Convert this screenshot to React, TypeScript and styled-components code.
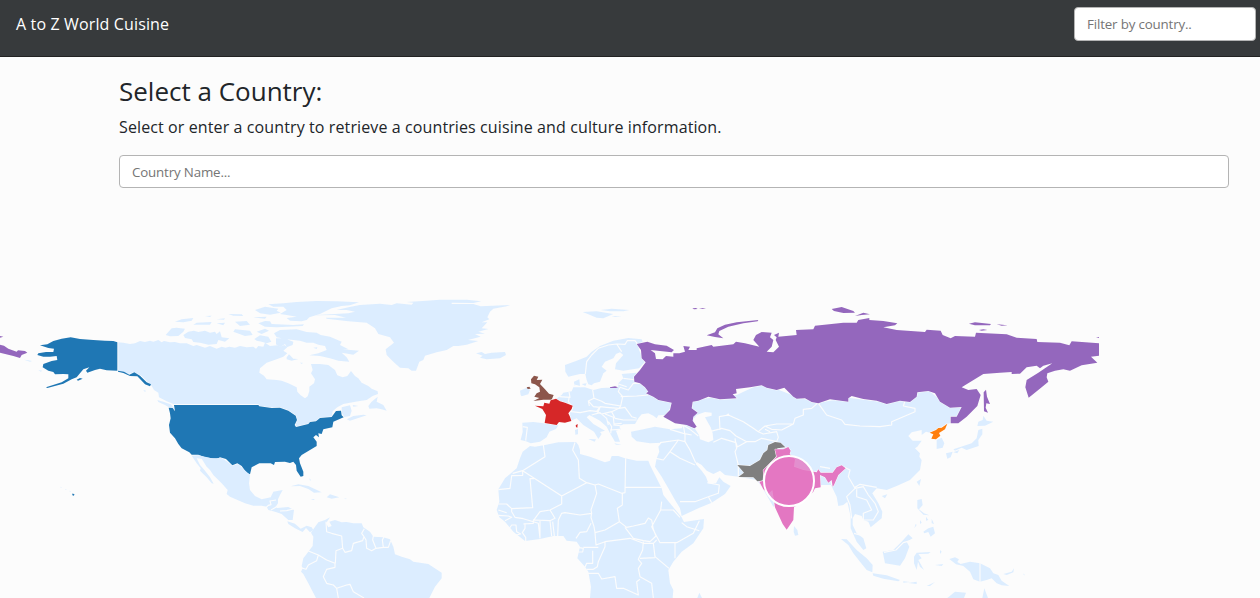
import React from "react";
import styled, { createGlobalStyle } from "styled-components";

const GlobalStyle = createGlobalStyle`
  *, *::before, *::after { box-sizing: border-box; }
  body {
    margin: 0;
    overflow: hidden;
    background: #fcfcfc;
    color: #212529;
    font-family: "Open Sans", "Noto Sans", sans-serif;
    font-size: 16px;
    line-height: 24px;
  }
`;

const Page = styled.div`
  display: flex;
  flex-direction: column;
  height: 598px;
  overflow: hidden;
`;

const NavBar = styled.header`
  display: flex;
  justify-content: space-between;
  align-items: flex-start;
  flex: none;
  height: 57px;
  padding: 7px 4px 0 16px;
  background: #373a3c;
  border-bottom: 1px solid #222;
`;

const Brand = styled.a`
  margin-top: 5px;
  color: #fff;
  font-size: 16px;
  font-weight: 500;
  letter-spacing: 0.14px;
`;

const TextInput = styled.input<{ $width: string; $height: number }>`
  display: block;
  width: ${(p) => p.$width};
  height: ${(p) => p.$height}px;
  padding: 0 12px;
  border: 1px solid #b4b4b4;
  border-radius: 4px;
  background: #fff;
  font-family: inherit;
  font-size: 13.33px;
  letter-spacing: -0.16px;
  outline: none;
  &::placeholder { color: #757575; opacity: 1; }
`;

const Search = styled.section`
  flex: none;
  height: 233px;
  padding: 18px 31px 0 119px;
`;

const Title = styled.h3`
  margin: 0 0 7px;
  font-size: 26px;
  line-height: 33px;
  font-weight: 400;
`;

const Lead = styled.p`
  margin: 0 0 16px;
  letter-spacing: 0.11px;
`;

const MapCanvas = styled.svg`
  display: block;
  flex: none;
  width: 1260px;
  height: 308px;
`;

const Sheet = styled.g`
  fill: #dcedff;
`;

const Country = styled.path<{ $color: string }>`
  fill: ${(p) => p.$color};
  stroke: #fcfcfc;
  stroke-width: 3;
  stroke-linejoin: round;
  paint-order: stroke;
`;

const Border = styled.path`
  fill: none;
  stroke: #fcfcfc;
  stroke-width: 3.4;
  stroke-linejoin: round;
`;

const Water = styled.path`
  fill: #fcfcfc;
`;

const Bubble = styled.circle`
  fill: #e377c2;
  fill-opacity: 0.8;
  stroke: #fff;
  stroke-width: 2;
`;

// Each map sheet holds outlines at a third of a pixel per unit, from its own origin.
const at = (x: number, y: number) => `translate(${x} ${y}) scale(0.333333)`;

const colors = {
  usa: "#1f77b4",
  russia: "#9467bd",
  uk: "#8c564b",
  france: "#d62728",
  india: "#e377c2",
  pakistan: "#7f7f7f",
  northKorea: "#ff7f0e",
};

function NorthAmerica() {
  return (
    <>
      <Sheet transform={at(150, 290)}>
        <path d="M-97 157 -97 242 -65 252 -47 246 -25 258 3 285 12 300 25 308 27 322 50 334 72 343 325 343 330 349 365 354 390 354 415 362 435 375 440 390 436 410 455 408 475 402 480 396 498 394 510 384 545 380 548 364 562 352 580 342 600 338 625 334 650 330 668 318 684 312 683 304 665 296 655 288 635 278 625 265 615 258 603 243 592 258 578 262 562 256 555 240 535 225 510 222 483 222 488 240 483 250 495 268 492 280 478 290 478 303 473 319 465 325 452 316 442 305 440 292 415 280 395 272 380 270 350 268 342 257 328 248 330 235 350 218 380 208 400 200 412 190 400 182 412 172 403 165 390 170 382 166 360 168 345 158 340 170 325 168 318 176 310 170 290 172 270 168 255 173 238 170 226 173 215 170 200 176 180 168 165 173 140 165 130 168 110 160 90 160 75 156 60 157 42 153 35 157 25 150 10 155 0 152 -15 156 -30 153 -45 160 -60 162 -80 158Z" />
        <path d="M47 135 65 115 80 113 105 116 100 125 85 138 60 139Z M100 135 115 125 132 122 145 126 165 122 180 128 195 125 200 132 210 124 215 142 238 145 225 155 205 150 200 162 175 164 150 158 130 156 125 148 105 144Z M75 95 95 88 130 84 125 92 100 97Z M130 104 140 98 185 96 180 104Z M200 100 225 98 220 106Z M165 78 185 77 180 81Z M235 72 275 73 280 78 250 77Z M200 88 225 85 222 89Z M255 95 290 93 300 104 270 108Z M325 100 345 93 360 94 365 102 430 105 462 103 458 108 380 112 345 110Z M355 43 400 40 440 36 500 33 560 34 627 37 600 46 575 48 545 55 510 72 478 82 470 90 455 94 420 92 410 84 440 80 410 75 390 72 410 60 400 50 370 50Z M315 60 345 50 385 56 380 62 392 68 360 74 330 70Z M310 82 350 80 345 86Z M255 118 300 122 308 135 285 138 250 125Z M320 125 345 116 357 122 335 132Z M372 130 390 120 440 118 470 126 500 128 512 135 540 140 575 155 570 165 595 178 578 178 627 182 610 194 575 188 590 202 598 215 565 212 540 205 510 198 478 196 505 190 530 180 525 168 505 164 490 158 470 158 450 152 410 148 380 142Z M313 147 330 136 355 140 364 155 350 160 335 155 320 152Z M378 145 400 144 430 155 428 165 410 172 405 162 390 172 378 163Z M410 202 417 193 430 206 445 207 425 212 410 208Z M490 173 502 172 500 177Z M450 218 458 218 456 222Z" />
        <path d="M655 348 665 335 683 320 680 335 700 345 710 362 695 358 680 355 658 356Z M590 388 610 378 640 374 650 376 625 384 600 392Z M575 352 600 346 605 362 600 378 583 381 575 368Z M608 345 625 348 610 350Z" />
        <path d="M-20 300 -12 302 -15 306Z M22 330 40 335 62 343 74 356 65 357 45 345 25 336Z" />
        <Border d="M-97 155V243" />
        <Country $color={colors.usa} d="M72 345 325 345 328 349 365 354 390 353 415 362 437 377 441 390 434 405 438 411 475 402 480 396 498 394 510 384 545 381 558 363 573 362 575 376 581 382 550 395 547 412 520 418 515 432 505 430 507 442 498 435 490 442 500 455 500 468 480 480 455 495 447 505 450 520 460 545 460 558 452 560 440 542 438 525 430 515 420 519 405 515 375 516 372 525 362 520 328 520 305 532 300 553 290 549 275 528 262 520 247 526 228 507 210 502 200 507 165 502 145 494 125 494 118 487 95 475 85 462 75 445 60 428 57 405 62 385 60 370 56 353 68 354 75 364Z" />
      </Sheet>
      <Sheet transform={at(0, 290)}>
        <path d="M72 209 85 211 96 213 90 215Z M115 240 127 242 122 245Z M182 590 186 592 182 593Z M196 597 200 598 197 600Z M208 602 214 604 210 605Z" />
        <Country $color={colors.usa} d="M352 157 340 153 315 152 280 150 240 147 212 142 185 146 160 153 142 163 120 166 145 174 162 176 160 186 138 186 115 190 112 195 130 200 150 200 170 198 172 210 155 213 130 222 128 232 145 242 160 246 165 253 190 252 205 253 205 265 185 277 138 292 142 294 190 281 215 268 230 262 240 250 250 238 268 232 258 242 262 248 285 240 300 236 320 241 352 242Z" />
        <path fill={colors.usa} d="M354 242 372 245 388 254 403 247 420 257 430 267 440 277 453 283 450 289 435 283 420 267 412 259 390 258 370 249 354 245Z M230 269 240 264 248 266 234 272Z M216 611 220 611 224 614 219 618Z" />
        <path fill={colors.russia} d="M0 164 12 167 25 176 50 185 54 181 75 183 82 188 65 195 60 204 40 198 0 188Z M0 138 10 140 0 143Z" />
      </Sheet>
      <Sheet transform={at(240, 290)}>
        <path d="M290 60 325 52 340 49 360 45 420 41 455 45 470 40 515 44 520 38 500 36 560 32 600 29 680 29 724 34 700 39 635 38 635 42 700 42 722 49 810 45 800 49 760 56 750 65 742 82 748 88 725 97 742 97 725 115 745 117 715 125 735 131 705 132 722 140 684 150 715 153 680 164 655 168 640 168 620 180 590 187 555 197 550 210 538 215 528 242 515 242 505 235 480 233 460 215 440 195 437 178 462 158 450 142 415 132 405 115 380 98 325 94 260 86 258 83 318 83 285 75 220 76 285 72 325 70 345 65 320 60Z" />
        <Water d="M425 150 435 146 455 150 440 156 425 154Z" />
        <path d="M708 190 725 186 735 192 755 188 795 186 798 195 780 205 740 208 720 203 728 197Z" />
      </Sheet>
    </>
  );
}

function LatinAmerica() {
  return (
    <Sheet transform={at(180, 440)}>
      <path d="M35 47 55 46 95 55 125 54 140 64 157 77 175 72 190 87 210 104 207 130 210 150 225 168 245 178 272 172 280 155 308 150 300 165 294 178 294 190 287 200 292 204 325 201 342 210 338 240 325 240 305 222 285 215 265 210 260 200 245 197 220 197 195 190 150 170 140 162 143 150 125 130 100 105 90 90 80 80 65 56 50 55 60 75 75 92 90 112 101 131 95 130 80 112 60 92 62 85 50 70Z M322 244 345 251 362 266 380 257 395 262 400 270 390 277 378 264 368 276 345 265 325 252Z M332 139 355 133 385 138 425 157 402 158 385 147 360 138Z M440 172 450 163 478 172 455 176Z M393 177 405 177 400 180Z M492 175 500 176 498 178Z M388 115 393 120 390 122Z" />
      <path d="M400 268 415 247 435 240 450 232 438 250 445 262 455 258 448 245 465 240 485 247 500 246 520 250 545 250 550 262 570 275 580 290 610 292 630 298 640 320 645 343 665 350 690 358 700 365 745 372 785 398 785 415 765 440 748 474 408 474 385 430 370 402 363 395 368 385 365 378 370 355 385 335 398 318 400 290 393 278Z" />
      <Border d="M258 203 265 196 273 194 270 183 288 180M273 210 290 200M300 213 320 212 340 207M438 245 440 275 455 280 485 288 488 325 468 332 466 370M488 325 495 337 515 332 520 310 548 302 552 290 545 280 553 266M552 290 558 300 560 325 575 332 588 325 578 300 580 288M588 325 610 322 607 300 612 290M608 322 625 322 632 302M385 333 415 345 410 362 385 375 378 388 366 384M415 345 440 360 465 370 465 382 440 388 430 410 440 430 460 435 470 445 500 435 510 433 520 455 552 474M470 445 475 474" />
    </Sheet>
  );
}

function Africa() {
  return (
    <Sheet transform={at(490, 430)}>
      <path d="M90 85 98 65 120 48 135 50 165 45 205 37 258 36 265 45 270 60 270 72 300 80 345 97 360 92 365 78 385 78 405 85 440 92 475 92 480 105 490 125 515 175 520 195 540 220 575 262 582 276 642 267 640 295 610 340 575 365 550 395 535 420 540 460 550 480 548 504 300 504 303 470 295 425 285 410 262 385 270 350 260 335 230 332 220 318 190 318 150 327 105 333 70 305 45 275 28 262 20 240 28 215 25 178 45 145 80 115Z M622 504 628 488 636 504Z" />
      <Border d="M25 179 60 175 65 137 98 136 98 122 165 80 160 45M68 130 98 122 215 198 290 158 268 145 265 90 248 60 255 37M65 236 128 233 120 146 132 146M215 198 215 222 180 240 150 245 130 272M290 158 315 165 320 190 303 240 305 250 270 255 225 248 215 250 205 270M315 165 325 162 395 190 405 188 407 85M407 172 515 172M397 190 397 225 382 235 388 275 345 300 315 308 312 290 303 262 305 250M388 275 410 292 430 288 465 280 475 264 485 270 490 298 498 318 480 335 460 332 430 325 405 292M515 215 512 240 485 290 490 300 510 338 560 338 610 310 628 272M575 278 590 290 628 302M512 240 550 240 570 262M315 308 318 345 345 335 420 325 460 340 490 340 500 330M345 335 345 350 325 395 322 410 310 418 290 418M490 340 495 380 537 415M450 385 495 383M460 335 458 360 445 388 455 400 445 415 450 440 485 460 490 504M555 337 555 385M290 430 325 430 335 447 375 440 380 475 400 475 445 495 440 455 450 448M303 280 290 305 270 307 258 325M265 352 280 355 278 366 264 366M280 352 325 352M308 362 308 400 290 400 285 412M25 222 50 222 65 236 65 245 75 262 100 266 145 280 150 325M25 240 50 248M25 256 55 258 65 262 45 272M105 280 105 295 97 308 107 322 107 333M55 300 65 285 78 285 80 305 92 312 78 315M100 282 130 280 130 270 180 272 195 265 180 240M150 272 150 325M180 272 185 318M188 275 193 318M205 270 203 318" />
    </Sheet>
  );
}

function Europe() {
  return (
    <Sheet transform={at(490, 300)}>
      <path d="M278 36 320 34 370 42 340 55 320 53 295 43Z M332 30 365 26 418 30 400 34 360 34Z M365 48 395 49 375 51Z M225 195 260 182 290 170 305 155 330 138 370 122 415 114 455 118 458 125 445 135 447 150 465 185 447 205 400 212 375 208 378 190 400 165 390 157 378 162 370 175 345 185 335 200 350 212 340 220 330 245 312 250 305 256 295 253 290 240 286 222 270 222 235 230 226 215Z M253 258 252 245 268 238 270 258Z M275 252 290 250 286 258Z M92 285 90 272 110 263 120 270 115 283 95 289Z" />
      <path d="M97 368 130 366 162 370 205 376 198 387 178 395 170 412 150 425 122 430 108 424 92 420 98 395Z M295 417 318 418 314 425Z M255 390 264 386 264 403 256 404Z M373 430 395 434 378 434Z" />
      <path d="M198 297 215 285 220 278 245 274 250 262 285 262 310 270 335 264 385 262 385 250 400 235 395 222 440 218 440 240 455 250 475 270 475 280 500 298 545 305 545 320 525 345 505 346 500 355 490 347 475 340 455 343 445 355 435 372 400 373 388 380 392 388 378 392 390 425 375 425 360 400 350 380 330 362 308 350 298 345 290 352 310 372 345 392 330 396 335 402 325 417 312 395 280 375 260 355 242 362 240 340 248 322 215 308Z" />
      <Border d="M286 222 290 185 305 165 325 145 355 135 380 132 395 155M380 132 405 133 412 122 435 122 445 135M98 380 112 382 107 422M208 290 240 292 237 275M238 290 235 305 248 322 244 335 270 338 300 332 325 335 330 322 310 320 295 303 312 295 308 270M312 295 335 304 345 310 392 318 398 290 385 275 390 262M295 303 298 318M330 320 350 322 387 325 392 318M330 320 320 335 335 342 365 335 387 325M365 335 375 355 400 360 440 360M387 325 405 322 425 350 440 355M390 262 415 270 430 250 455 250M400 235 440 240M385 252 410 260M392 290 440 288 475 285M305 345 330 338 350 355 355 375M345 342 370 352 372 372 395 370M355 365 365 380 362 400M370 375 400 378M360 390 390 388M252 255 272 260" />
      <Country $color={colors.uk} d="M123 238 132 227 145 230 140 240 157 239 150 252 165 268 177 281 191 285 185 299 160 299 130 303 148 294 133 290 140 280 150 275 148 262 135 253 124 250Z" />
      <path fill={colors.uk} d="M110 262 118 260 122 266 113 267Z" />
      <Country $color={colors.france} d="M135 317 160 319 163 308 178 311 182 301 198 296 210 304 225 308 248 317 245 327 235 340 240 350 244 363 225 368 207 366 200 375 164 369 168 345 157 327Z" />
      <path fill={colors.france} d="M257 376 263 372 262 383 258 381Z" />
    </Sheet>
  );
}

function Asia() {
  return (
    <>
      <Sheet transform={at(630, 300)}>
        <path d="M185 300 320 285 395 250 500 290 565 308 655 293 770 308 862 275 895 270 930 300 1000 318 982 352 962 350 960 370 950 372 918 390 900 398 888 395 875 405 875 390 845 397 835 408 848 422 875 422 862 440 855 445 870 460 868 470 875 480 870 510 840 540 800 558 770 570 740 565 727 580 745 610 757 635 755 655 722 682 715 665 700 660 695 648 675 642 668 655 668 675 680 700 700 715 709 745 700 750 680 725 662 685 662 650 652 605 640 615 625 618 620 590 603 555 575 555 550 570 430 620 395 560 380 540 325 530 285 525 270 512 250 522 230 512 215 495 200 486 197 492 215 512 228 530 235 550 258 550 268 532 280 545 302 558 285 582 245 608 205 625 155 648 150 625 135 600 115 565 95 530 75 500 80 475 88 455 85 440 95 428 60 430 20 424 5 410 3 395 40 388 75 380 120 388 155 385 160 376 130 365 160 330Z" />
        <Water d="M200 345 225 336 245 338 245 347 225 352 235 370 242 382 248 400 250 420 235 427 210 418 207 405 196 388 190 358Z M285 348 295 340 300 348Z" />
        <Border d="M562 310 545 325 520 328 520 345 495 355 490 372 440 372 405 378 385 395 400 402 440 395 445 412 440 425M405 378 425 388 455 390 490 372M405 388 420 395M270 390 268 350 295 345 340 365 370 385 385 395M240 395 275 385 300 392 318 408 350 425 320 442M250 427 275 415 318 428 322 440M350 425 375 425 395 415 440 425M565 310 590 345 635 360 645 373 690 378 750 380 785 375 785 365 820 350 855 335 855 325 820 318 825 303M315 415 320 445 315 455 325 495 325 530M160 376 165 405 165 425 180 450 197 488M90 428 145 420 165 425M145 420 120 455 150 475 195 495M78 475 100 480 120 455M150 605 195 605 235 590 265 580 268 555 232 548M235 590 245 608M120 388 160 400 185 405M160 376 180 388 205 408M470 500 500 510 565 518M570 500 600 505M565 520 600 520 605 555M640 500 660 510 655 530 675 565 650 590 660 615 665 655M675 565 700 560 715 585 735 610 745 635 730 660 700 660M700 660 700 640 725 630 710 600 680 590 680 568M675 562 690 553 740 562M672 700 690 705" />
      </Sheet>
      <Sheet transform={at(720, 420)}>
        <Country $color={colors.pakistan} d="M52 135 90 138 120 120 130 100 142 90 145 75 165 66 182 68 196 82 172 85 172 100 165 115 140 140 130 160 128 182 112 184 100 172 55 171 72 158Z" />
        <Country $color={colors.india} d="M165 88 190 88 205 81 212 92 209 102 225 118 222 140 250 150 290 157 295 148 302 158 338 158 350 142 365 136 377 145 355 165 342 195 338 200 335 180 325 188 315 172 300 165 302 202 285 205 280 215 240 248 222 262 220 300 200 329 188 312 165 262 157 210 145 222 130 208 118 185 132 182 130 150 170 110Z" />
        <path d="M222 318 232 330 235 345 225 347 221 335Z M363 357 380 358 410 390 440 415 458 435 457 457 440 450 420 425 400 400 385 375Z M458 460 500 466 540 480 535 484 490 476 460 467Z M488 395 520 390 545 365 565 343 578 355 560 365 568 380 555 415 540 437 495 430Z M582 410 590 398 632 396 625 401 595 402 605 415 595 420 612 450 600 440 594 425 590 450 582 430Z M592 240 605 237 608 255 597 268 612 280 628 286 610 284 592 265Z M610 335 625 325 640 320 645 340 632 350 625 336 613 340Z M618 290 625 300 618 302Z M635 296 642 312 635 310Z M600 300 605 308 600 312Z M590 185 603 177 598 198Z M485 228 502 223 495 235Z M583 325 587 312 590 315Z M660 390 665 395 660 402Z M550 484 570 486 550 488Z M565 489 590 485 590 492Z M620 498 645 486 630 498Z M645 435 670 432 665 438Z" />
        <Border d="M492 397 528 390 550 368 572 362" />
      </Sheet>
      <Sheet transform={at(830, 400)}>
        <path d="M442 78 445 65 458 60 460 47 470 62 490 65 465 77Z M445 90 457 86 457 103 445 120 446 138 410 150 395 143 375 152 370 148 400 138 425 130 440 115Z M348 160 368 155 362 172 352 176Z M370 157 388 150 382 160Z M320 120 335 113 343 130 338 143 320 147Z M358 477 375 472 387 478 382 486 392 492 420 485 450 490 480 505 490 520 505 525 515 542 538 558 515 556 500 550 485 535 470 540 450 545 430 538 420 515 400 498 378 493Z M520 522 545 515 552 505 550 517 530 525Z M352 594 375 575 408 578 402 594Z M457 594 463 565 474 594Z M578 520 586 526 582 525Z" />
        <Border d="M450 485V550" />
        <Country $color={colors.northKorea} d="M299 98 318 90 325 84 335 83 352 71 345 88 327 99 331 107 318 118 304 116 310 103Z" />
      </Sheet>
    </>
  );
}

function Russia() {
  return (
    <Sheet transform={at(630, 300)}>
      <Country
        $color={colors.russia}
        d="M20 132 52 125 75 133 110 137 132 150 125 157 90 153 62 150 75 160 78 177 98 178 108 168 130 170 130 160 148 160 165 155 160 138 180 140 175 150 200 150 200 145 245 135 250 140 310 133 318 125 345 130 388 140 370 120 378 105 395 96 425 98 420 112 430 120 425 140 410 155 430 157 447 140 437 120 440 112 432 105 447 98 445 110 500 105 498 90 550 88 555 77 640 68 680 68 685 60 718 54 718 60 760 63 802 70 795 76 760 82 800 90 885 96 890 89 932 92 938 105 962 115 975 108 1035 110 1038 98 1130 103 1160 113 1220 117 1222 126 1290 128 1318 136 1325 124 1407 130 1407 167 1383 170 1402 188 1355 196 1320 212 1300 208 1275 212 1252 220 1250 232 1255 245 1235 262 1210 282 1196 293 1186 262 1190 240 1225 218 1267 190 1240 197 1230 205 1220 197 1190 202 1170 221 1145 222 1145 216 1110 218 1060 222 995 262 1015 270 1040 267 1052 285 1042 318 1010 350 985 370 962 370 962 350 980 350 995 321 960 323 930 305 915 280 895 273 862 277 860 290 840 306 810 302 770 312 740 302 700 297 665 288 655 295 655 305 600 298 565 310 545 306 525 295 500 296 490 290 463 263 440 270 410 263 395 256 360 262 318 267 320 280 308 283 320 295 270 298 235 290 205 302 188 305 185 325 203 338 190 350 188 362 200 380 193 385 170 375 135 370 100 350 120 330 125 308 85 300 70 290 48 280 55 275 45 262 30 250 13 245 12 230 30 210 47 187 35 175 33 150Z"
      />
      <path fill={colors.russia} d="M230 106 255 97 262 85 285 74 320 67 385 60 383 64 340 70 295 80 268 93 265 103 280 115 255 111Z M605 27 635 21 670 33 675 38 640 39 612 33Z M675 48 700 38 720 43 695 45Z M187 25 198 24 203 27 192 28Z M207 25 228 24 218 27Z M1017 71 1035 67 1083 72 1080 76 1035 76Z M1100 73 1133 76 1115 77Z M1047 90 1060 88 1072 90 1055 92Z M1398 113 1407 111 1407 114Z M1061 277 1068 269 1071 290 1080 312 1069 310 1067 323 1074 338 1062 334Z M-60 262 -45 259 -36 262 -42 264 -60 264Z" />
    </Sheet>
  );
}

function WorldMap() {
  return (
    <MapCanvas viewBox="0 290 1260 308">
      <NorthAmerica />
      <LatinAmerica />
      <Africa />
      <Europe />
      <Asia />
      <Russia />
      <Bubble cx="789" cy="481" r="25" />
    </MapCanvas>
  );
}

export default function App() {
  return (
    <Page>
      <GlobalStyle />
      <NavBar>
        <Brand>A to Z World Cuisine</Brand>
        <TextInput $width="182px" $height={34} placeholder="Filter by country.." />
      </NavBar>
      <Search>
        <Title>Select a Country:</Title>
        <Lead>Select or enter a country to retrieve a countries cuisine and culture information.</Lead>
        <TextInput $width="100%" $height={33} placeholder="Country Name..." />
      </Search>
      <WorldMap />
    </Page>
  );
}
